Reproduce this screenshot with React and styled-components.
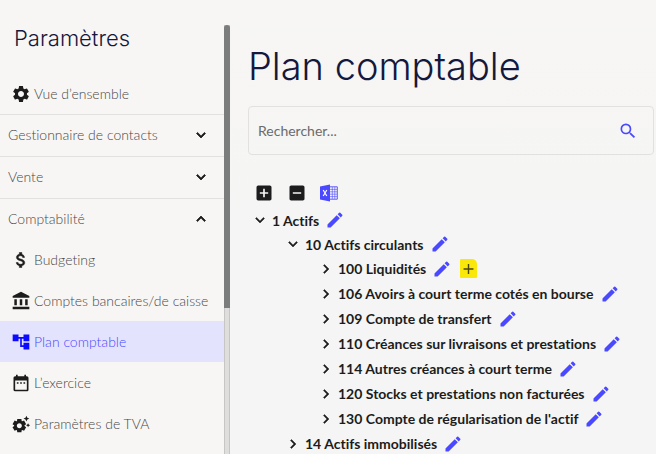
import React from "react";
import styled, { createGlobalStyle } from "styled-components";
import {
  MdSettings,
  MdAttachMoney,
  MdAccountBalance,
  MdAccountTree,
  MdDateRange,
  MdSettingsSuggest,
  MdExpandMore,
  MdExpandLess,
  MdChevronRight,
  MdSearch,
  MdAddBox,
  MdIndeterminateCheckBox,
  MdEdit,
  MdAdd,
} from "react-icons/md";

const colors = {
  background: "#f7f6f4",
  navy: "#14183c",
  text: "#484848",
  dark: "#1c1c1c",
  line: "#e2e1df",
  blue: "#4b49ff",
  active: "#e3e3fd",
  highlight: "#fbe80b",
};

const menu = [
  { label: "Vue d’ensemble", icon: MdSettings },
  { label: "Gestionnaire de contacts", section: true },
  { label: "Vente", section: true },
  { label: "Comptabilité", section: true, open: true },
  { label: "Budgeting", icon: MdAttachMoney, bold: true },
  { label: "Comptes bancaires/de caisse", icon: MdAccountBalance },
  { label: "Plan comptable", icon: MdAccountTree, active: true },
  { label: "L’exercice", icon: MdDateRange },
  { label: "Paramètres de TVA", icon: MdSettingsSuggest },
];

const accounts = [
  {
    name: "1 Actifs",
    children: [
      {
        name: "10 Actifs circulants",
        children: [
          { name: "100 Liquidités", canAdd: true },
          { name: "106 Avoirs à court terme cotés en bourse" },
          { name: "109 Compte de transfert" },
          { name: "110 Créances sur livraisons et prestations" },
          { name: "114 Autres créances à court terme" },
          { name: "120 Stocks et prestations non facturées" },
          { name: "130 Compte de régularisation de l'actif" },
        ],
      },
      { name: "14 Actifs immobilisés" },
    ],
  },
];

const ExcelIcon = () => (
  <svg width="18" height="18" viewBox="0 0 18 18" aria-hidden="true">
    <path d="M10 2.8h7.3v12.4H10" fill="#f7f6f4" stroke={colors.blue} strokeWidth="0.9" />
    <path
      d="M10 5.4h7M10 7.8h7M10 10.2h7M10 12.6h7M12.3 3v12M14.8 3v12"
      stroke={colors.blue}
      strokeWidth="0.6"
    />
    <path d="M0 2.5 10 0.5v17L0 15.5z" fill={colors.blue} />
    <path d="M3.2 6l3.6 6M6.8 6l-3.6 6" stroke="#fff" strokeWidth="1.2" />
  </svg>
);

const Account = ({ account }) => (
  <li>
    <AccountRow $group={!!account.children}>
      <IconButton $bold aria-label={account.children ? "Réduire" : "Développer"}>
        {account.children ? <MdExpandMore size={18} /> : <MdChevronRight size={18} />}
      </IconButton>
      <AccountName>{account.name}</AccountName>
      <IconButton $blue aria-label="Modifier">
        <MdEdit size={20} />
      </IconButton>
      {account.canAdd && (
        <AddButton aria-label="Ajouter">
          <MdAdd size={18} />
        </AddButton>
      )}
    </AccountRow>
    {account.children && (
      <Branch>
        {account.children.map((child) => (
          <Account key={child.name} account={child} />
        ))}
      </Branch>
    )}
  </li>
);

const App = () => (
  <Page>
    <GlobalStyle />
    <Sidebar>
      <SidebarTitle>Paramètres</SidebarTitle>
      <nav>
        {menu.map(({ label, icon: Icon, section, open, active, bold }) =>
          section ? (
            <SectionButton key={label} aria-expanded={!!open}>
              {label}
              {open ? <MdExpandLess size={18} /> : <MdExpandMore size={18} />}
            </SectionButton>
          ) : (
            <MenuLink key={label} href="#" $active={active} $bold={bold}>
              <Icon size={20} />
              {label}
            </MenuLink>
          )
        )}
      </nav>
    </Sidebar>
    <ScrollTrack>
      <ScrollThumb />
    </ScrollTrack>
    <Main>
      <Title>Plan comptable</Title>
      <SearchBox>
        <SearchInput type="text" placeholder="Rechercher..." aria-label="Rechercher" />
        <IconButton $blue aria-label="Lancer la recherche">
          <MdSearch size={20} />
        </IconButton>
      </SearchBox>
      <Toolbar>
        <IconButton aria-label="Tout développer">
          <MdAddBox size={20} />
        </IconButton>
        <IconButton aria-label="Tout réduire">
          <MdIndeterminateCheckBox size={20} />
        </IconButton>
        <IconButton $blue aria-label="Exporter vers Excel">
          <ExcelIcon />
        </IconButton>
      </Toolbar>
      <Tree>
        {accounts.map((account) => (
          <Account key={account.name} account={account} />
        ))}
      </Tree>
    </Main>
  </Page>
);

export default App;

const GlobalStyle = createGlobalStyle`
  * {
    box-sizing: border-box;
  }
  body {
    margin: 0;
    background: ${colors.background};
    font-family: Lato, sans-serif;
    font-variant-ligatures: none;
  }
  button, input {
    font: inherit;
    font-variant-ligatures: inherit;
    border: 0;
    padding: 0;
    background: none;
  }
  svg path[fill="none"] {
    stroke: none;
  }
`;

const Page = styled.div`
  display: flex;
  height: 100vh;
  overflow: hidden;
`;

const Sidebar = styled.aside`
  flex: 0 0 224px;
  overflow: hidden;
`;

const SidebarTitle = styled.h2`
  margin: 0;
  padding: 24px 14px 20px;
  color: ${colors.navy};
  font: 300 22px/29px Inter, sans-serif;
`;

const MenuLink = styled.a`
  display: flex;
  align-items: center;
  gap: 3px;
  height: 41px;
  padding-left: 11px;
  color: ${(props) => (props.$active ? colors.blue : colors.text)};
  background: ${(props) => (props.$active ? colors.active : "transparent")};
  font-size: 14px;
  font-weight: 300;
  text-decoration: none;

  svg {
    color: ${(props) => (props.$active ? "#0b09ff" : colors.dark)};
    stroke-width: ${(props) => (props.$bold ? "0.6" : "0")};
  }
`;

const SectionButton = styled.button`
  display: flex;
  align-items: center;
  justify-content: space-between;
  width: 100%;
  height: 42px;
  padding: 0 14px 2px 8px;
  border-top: 1px solid ${colors.line};
  color: ${colors.text};
  font-size: 14px;
  font-weight: 300;

  svg {
    color: ${colors.dark};
    stroke-width: 1;
  }

  & + a {
    margin-top: -1px;
  }
`;

const ScrollTrack = styled.div`
  flex: 0 0 6px;
  margin-top: 25px;
  border-right: 1px solid #c6c6c5;
  border-left: 1px solid #c6c6c5;
  background: #dfdedd;
`;

const ScrollThumb = styled.div`
  height: 66%;
  margin: 0 -1px;
  border-radius: 3px 3px 0 0;
  background: #7b7c7c;
`;

const Main = styled.main`
  flex: 1;
  min-width: 0;
  padding: 42px 2px 0 18px;
  background: linear-gradient(#f7f6f4, #f5f5f5 50%);
`;

const Title = styled.h1`
  margin: 0 0 16px;
  color: ${colors.navy};
  font: 300 38px/48px Inter, sans-serif;
`;

const SearchBox = styled.div`
  display: flex;
  align-items: center;
  height: 49px;
  padding: 0 15px 0 9px;
  border: 1px solid ${colors.line};
  border-radius: 4px;
`;

const SearchInput = styled.input`
  flex: 1;
  min-width: 0;
  outline: none;
  font-size: 14px;

  &::placeholder {
    color: #6b6b6b;
    opacity: 1;
  }
`;

const IconButton = styled.button`
  display: flex;
  color: ${(props) => (props.$blue ? colors.blue : colors.dark)};

  svg {
    stroke-width: ${(props) => (props.$bold ? "0.6" : "0")};
  }
`;

const Toolbar = styled.div`
  display: flex;
  align-items: center;
  gap: 13px;
  margin: 28px 0 5px;
  padding-left: 6px;
`;

const Tree = styled.ul`
  margin: 0;
  padding: 0 0 0 3px;
  list-style: none;
`;

const Branch = styled.ul`
  margin: 0;
  padding: 0 0 0 33px;
  list-style: none;
`;

const AccountRow = styled.div`
  display: flex;
  align-items: center;
  height: ${(props) => (props.$group ? 24 : 25)}px;
`;

const AccountName = styled.span`
  margin: 0 6px 0 3px;
  color: ${colors.dark};
  font-size: 14px;
  font-weight: 700;
  white-space: nowrap;
`;

const AddButton = styled.button`
  display: flex;
  align-items: center;
  justify-content: center;
  width: 17px;
  height: 19px;
  margin-left: 8px;
  border-radius: 1px 5px 1px 1px;
  color: #4a4609;
  background: ${colors.highlight};
`;
